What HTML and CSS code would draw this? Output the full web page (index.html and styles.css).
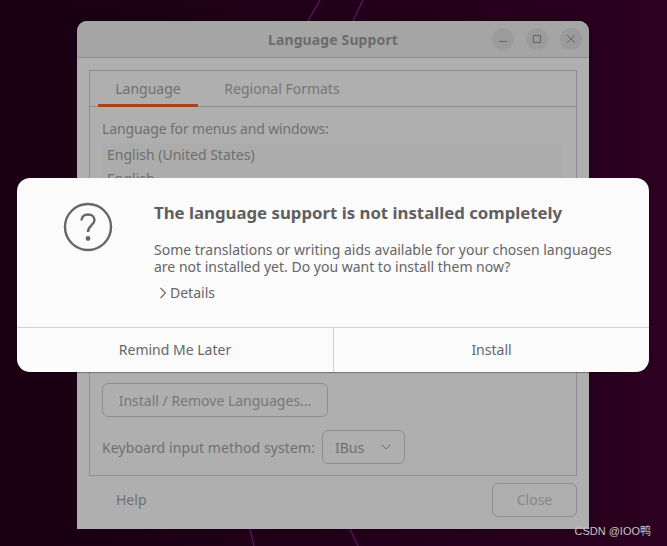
FILE: index.html
```html
<!DOCTYPE html>
<html lang="en">

<head>
  <meta charset="UTF-8" />
  <meta name="viewport" content="width=device-width, initial-scale=1.0" />
  <title>Language Support</title>
  <link rel="stylesheet" href="styles.css">
</head>

<body>
  <div class="desktop">
    <svg class="wallpaper" width="667" height="546" viewBox="0 0 667 546">
      <path d="M320 0L308 21" />
      <path d="M363 0L353 21" />
      <path d="M250 529L254 546" />
      <path d="M350 529L358 546" />
    </svg>

    <div class="window">
      <div class="titlebar">
        <span class="title">Language Support</span>
        <div class="win-buttons">
          <span class="win-btn">
            <svg width="12" height="12" viewBox="0 0 12 12"><path d="M2 8.5H10" /></svg>
          </span>
          <span class="win-btn">
            <svg width="12" height="12" viewBox="0 0 12 12"><rect x="2.5" y="2.5" width="7" height="7" /></svg>
          </span>
          <span class="win-btn">
            <svg width="12" height="12" viewBox="0 0 12 12"><path d="M2 2L10 10M10 2L2 10" /></svg>
          </span>
        </div>
      </div>

      <div class="content">
        <div class="frame">
          <div class="tabs">
            <div class="tab active">Language</div>
            <div class="tab">Regional Formats</div>
          </div>
          <div class="panel">
            <div class="label">Language for menus and windows:</div>
            <div class="lang-list">
              <div class="lang-row">English (United States)</div>
              <div class="lang-row">English</div>
            </div>
            <button type="button" class="btn install-btn">Install / Remove Languages...</button>
            <div class="input-row">
              <span class="input-label">Keyboard input method system:</span>
              <div class="combo">
                <span>IBus</span>
                <svg width="12" height="8" viewBox="0 0 12 8"><path d="M1.5 1.5L6 6L10.5 1.5" /></svg>
              </div>
            </div>
          </div>
        </div>
        <div class="footer">
          <span class="help">Help</span>
          <button type="button" class="btn close-btn">Close</button>
        </div>
      </div>
    </div>

    <div class="dialog">
      <div class="dialog-body">
        <svg class="question" width="50" height="50" viewBox="0 0 50 50">
          <circle cx="25" cy="25" r="23" />
          <path d="M18.5 18.5C18.5 14.5 21.5 12.5 25 12.5C28.5 12.5 31.5 14.5 31.5 18C31.5 23 25 23.5 25 30" />
          <circle class="dot" cx="25" cy="36.5" r="2.4" />
        </svg>
        <div class="dialog-text">
          <h1>The language support is not installed completely</h1>
          <p>Some translations or writing aids available for your chosen languages<br>are not installed yet. Do you want to install them now?</p>
          <div class="details">
            <svg width="8" height="12" viewBox="0 0 8 12"><path d="M1.5 1L6.5 6L1.5 11" /></svg>
            <span>Details</span>
          </div>
        </div>
      </div>
      <div class="dialog-actions">
        <div class="action">Remind Me Later</div>
        <div class="action">Install</div>
      </div>
    </div>

    <div class="watermark">CSDN @IOO鸭</div>
  </div>
</body>

</html>
```

FILE: styles.css
```css
body {
  margin: 0;
  font-family: "Noto Sans", "Noto Sans CJK SC", sans-serif;
  font-size: 14px;
}

.desktop {
  position: relative;
  width: 667px;
  height: 546px;
  overflow: hidden;
  background: linear-gradient(90deg, #1a0012 0%, #22001a 50%, #2c0020 100%);
}

.wallpaper {
  position: absolute;
  left: 0;
  top: 0;
}

.wallpaper path {
  fill: none;
  stroke: #5a1458;
  stroke-width: 1.5;
}

/* Background window */
.window {
  position: absolute;
  left: 77px;
  top: 21px;
  width: 512px;
  height: 508px;
  background: #afafaf;
  border-radius: 10px 10px 0 0;
  color: #6f6f6f;
  box-shadow: 0 0 14px rgba(0, 0, 0, 0.25);
}

.titlebar {
  position: relative;
  height: 36px;
  display: flex;
  align-items: center;
  justify-content: center;
  background: #a5a5a5;
  border-bottom: 1px solid #8e8e8e;
  border-radius: 10px 10px 0 0;
}

.title {
  font-weight: bold;
  letter-spacing: 0.12px;
  color: #6c6c6c;
}

.win-buttons {
  position: absolute;
  right: 7px;
  top: 7px;
  display: flex;
  gap: 12px;
}

.win-btn {
  width: 22px;
  height: 22px;
  border-radius: 50%;
  background: #9b9b9b;
  display: flex;
  align-items: center;
  justify-content: center;
}

.win-btn path,
.win-btn rect {
  fill: none;
  stroke: #666;
  stroke-width: 1;
}

.content {
  padding: 12px 12px 0;
}

.frame {
  height: 404px;
  border: 1px solid #8e8e8e;
}

.tabs {
  display: flex;
  height: 35px;
  padding-left: 8px;
  border-bottom: 1px solid #8e8e8e;
}

.tab {
  width: 100px;
  height: 33px;
  line-height: 36px;
  text-align: center;
  margin-right: 25px;
  color: #767676;
}

.tab:last-child {
  width: 118px;
}

.tab.active {
  border-bottom: 3px solid #a8431f;
  color: #6f6f6f;
}

.panel {
  padding: 12px;
}

.label {
  line-height: 19px;
  letter-spacing: -0.13px;
}

.lang-list {
  height: 229px;
  margin: 5px 2px 11px 0;
  background: #acacac;
  overflow: hidden;
}

.lang-row {
  height: 24px;
  line-height: 24px;
  padding-left: 5px;
}

.btn {
  font: inherit;
  color: #777;
  background: #afafaf;
  border: 1px solid #8e8e8e;
  border-radius: 6px;
  height: 34px;
  padding: 0;
}

.install-btn {
  width: 226px;
  display: block;
}

.input-row {
  display: flex;
  align-items: center;
  gap: 7px;
  margin-top: 13px;
}

.input-label {
  letter-spacing: 0.1px;
}

.combo {
  width: 83px;
  height: 34px;
  box-sizing: border-box;
  border: 1px solid #8e8e8e;
  border-radius: 6px;
  display: flex;
  align-items: center;
  justify-content: space-between;
  padding: 0 12px;
}

.combo path {
  fill: none;
  stroke: #707070;
  stroke-width: 1;
}

.footer {
  display: flex;
  align-items: center;
  justify-content: space-between;
  height: 48px;
  padding-left: 27px;
}

.help {
  margin-bottom: 2px;
}

.close-btn {
  width: 85px;
  padding-bottom: 2px;
  color: #868686;
}

/* Dialog on top */
.dialog {
  position: absolute;
  left: 17px;
  top: 178px;
  width: 632px;
  height: 194px;
  display: flex;
  flex-direction: column;
  background: #fbfbfb;
  border-radius: 13px;
  box-shadow: 0 1px 1px rgba(0, 0, 0, 0.35);
  color: #666;
}

.dialog-body {
  display: flex;
  flex: 1;
}

.question {
  margin: 24px 0 0 46px;
}

.question circle,
.question path {
  fill: none;
  stroke: #666;
  stroke-width: 2.4;
}

.question .dot {
  fill: #666;
  stroke: none;
}

.dialog-text {
  margin: 23px 0 0 41px;
}

h1 {
  margin: 0;
  font-size: 16.8px;
  line-height: 23px;
  font-weight: bold;
  color: #5f5f5f;
}

p {
  margin: 17px 0 0;
  line-height: 17px;
}

.details {
  display: flex;
  align-items: center;
  gap: 3px;
  margin: 8px 0 0 5px;
  line-height: 19px;
}

.details path {
  fill: none;
  stroke: #666;
  stroke-width: 1.1;
}

.dialog-actions {
  display: flex;
  height: 44px;
  border-top: 1px solid #d0d0d0;
}

.action {
  flex: 1;
  display: flex;
  align-items: center;
  justify-content: center;
  padding-bottom: 2px;
}

.action:first-child {
  flex: none;
  width: 316px;
  border-right: 1px solid #d0d0d0;
}

.watermark {
  position: absolute;
  right: 16px;
  top: 522px;
  font-family: "Liberation Sans", "Noto Sans CJK SC", sans-serif;
  font-size: 11px;
  color: #c4c4c4;
}
```
